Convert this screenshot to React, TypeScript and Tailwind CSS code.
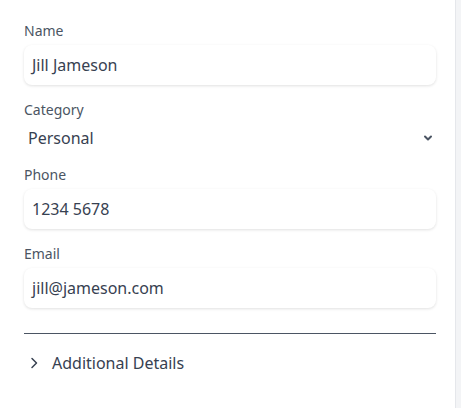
import React from "react";

function Field({ label, value }: { label: string; value: string }) {
  return (
    <div className="flex flex-col">
      <div className="text-[14px] leading-[18px] text-[#4b5563]">{label}</div>
      <div className="mt-[5px] flex h-10 items-center rounded-lg bg-white px-2 text-[16px] text-[#374151] shadow-[0_1px_3px_rgba(0,0,0,0.12)]">
        {value}
      </div>
    </div>
  );
}

export default function App() {
  return (
    <div className="flex h-[408px] w-[461px] bg-[#f3f4f6]" style={{ fontFamily: '"Noto Sans", "Open Sans", sans-serif' }}>
      <div className="flex h-full w-[456px] flex-col border-r border-[#e5e7eb] bg-white pl-6 pr-[19px] pt-[22px]">
        <div className="flex flex-col gap-4">
          <Field label="Name" value="Jill Jameson" />
          <div className="flex flex-col">
            <div className="text-[14px] leading-[18px] text-[#4b5563]">Category</div>
            <div className="mt-[6px] flex h-[25px] items-center justify-between pl-1 pr-[3px] text-[16px] text-[#374151]">
              <span>Personal</span>
              <svg width="10" height="10" viewBox="0 0 10 10" fill="none" stroke="#4b5563" strokeWidth="2" strokeLinecap="round" strokeLinejoin="round">
                <path d="M2 3.5 L5 6.5 L8 3.5" />
              </svg>
            </div>
          </div>
          <Field label="Phone" value="1234 5678" />
          <Field label="Email" value="jill@jameson.com" />
        </div>
        <div className="mt-[25px] border-t border-[#4b5563]" />
        <div className="mt-[17px] flex items-center gap-[13px] pl-[5px] text-[16px] text-[#374151]">
          <svg width="10" height="14" viewBox="0 0 10 14" fill="none" stroke="#374151" strokeWidth="1.5" strokeLinecap="round" strokeLinejoin="round">
            <path d="M3 2.5 L7.5 7 L3 11.5" />
          </svg>
          <span>Additional Details</span>
        </div>
      </div>
    </div>
  );
}
